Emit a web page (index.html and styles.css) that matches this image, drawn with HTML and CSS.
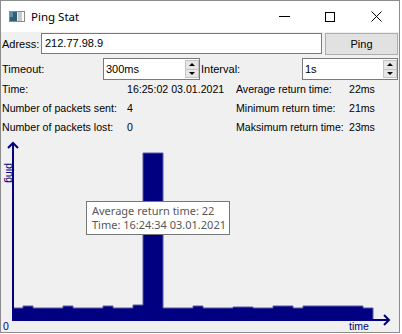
FILE: index.html
```html
<!DOCTYPE html>
<html lang="en">
<head>
    <meta charset="UTF-8">
    <title>Ping Stat</title>
    <link rel="stylesheet" href="styles.css">
</head>
<body>
    <div class="window">
        <div class="titlebar">
            <svg class="app-icon" width="16" height="11" viewBox="0 0 16 11">
                <rect x="0.5" y="0.5" width="15" height="10" fill="#e8e8e8" stroke="#8a8a8a"/>
                <rect x="1" y="1" width="7" height="9" fill="#2e5e78"/>
                <rect x="1" y="1" width="3" height="5" fill="#5f8fa8"/>
                <rect x="9" y="1" width="4" height="9" fill="#c9c9c9"/>
                <rect x="13" y="1" width="2" height="9" fill="#ffffff"/>
            </svg>
            <span class="title">Ping Stat</span>
            <div class="caption">
                <span class="cap">
                    <svg width="11" height="11" viewBox="0 0 11 11"><path d="M0 5.5H11" stroke="#000" stroke-width="1"/></svg>
                </span>
                <span class="cap">
                    <svg width="10" height="10" viewBox="0 0 10 10"><rect x="0.5" y="0.5" width="9" height="9" fill="none" stroke="#000"/></svg>
                </span>
                <span class="cap">
                    <svg width="11" height="11" viewBox="0 0 11 11"><path d="M0.5 0.5L10.5 10.5M10.5 0.5L0.5 10.5" stroke="#000" stroke-width="1"/></svg>
                </span>
            </div>
        </div>

        <div class="content">
            <div class="address-row">
                <span class="lbl lbl-address">Adress:</span>
                <div class="textbox">212.77.98.9</div>
                <div class="btn">Ping</div>
            </div>

            <div class="spin-row">
                <span class="lbl lbl-wide">Timeout:</span>
                <div class="spin spin-timeout">
                    <span class="spin-value">300ms</span>
                    <div class="spin-btns"><span class="arrow up"></span><span class="arrow down"></span></div>
                </div>
                <span class="lbl lbl-wide">Interval:</span>
                <div class="spin spin-interval">
                    <span class="spin-value">1s</span>
                    <div class="spin-btns"><span class="arrow up"></span><span class="arrow down"></span></div>
                </div>
            </div>

            <div class="stats">
                <span>Time:</span>
                <span>16:25:02 03.01.2021</span>
                <span>Average return time:</span>
                <span>22ms</span>
                <span>Number of packets sent:</span>
                <span>4</span>
                <span>Minimum return time:</span>
                <span>21ms</span>
                <span>Number of packets lost:</span>
                <span>0</span>
                <span>Maksimum return time:</span>
                <span>23ms</span>
            </div>

            <div class="chart">
                <svg class="chart-svg" width="398" height="194" viewBox="1 137 398 194">
                    <polygon class="bars" points="13,308 23,308 23,306 33,306 33,308 63,308 63,306 73,306 73,308 103,308 103,306 113,306 113,308 133,308 133,305 143,305 143,153 163,153 163,308 193,308 193,306 203,306 203,308 233,308 233,307 253,307 253,308 273,308 273,306 293,306 293,308 303,308 303,306 363,306 363,308 373,308 373,320 13,320"/>
                    <path class="axis" d="M13 321V143M8 148L13 143L18 148"/>
                    <path class="axis" d="M12 320H389M384 315L389 320L384 325"/>
                    <text class="axis-label" transform="translate(6,163) rotate(90)">ping</text>
                    <text class="axis-label" x="3" y="330">0</text>
                    <text class="axis-label" x="349" y="330">time</text>
                </svg>
                <div class="tooltip">Average return time: 22<br>Time: 16:24:34 03.01.2021</div>
            </div>
        </div>
    </div>
</body>
</html>
```

FILE: styles.css
```css
body { margin: 0; background: #fff; font-family: "Liberation Sans", Arial, sans-serif; font-size: 11px; color: #000; }
.window { width: 400px; height: 333px; box-sizing: border-box; border: 1px solid #8c8c8c; display: flex; flex-direction: column; }

.titlebar { height: 31px; flex-shrink: 0; background: #fff; display: flex; align-items: center; }
.app-icon { display: block; margin-left: 8px; margin-top: -1px; }
.title { margin-left: 6px; margin-top: -1px; font-family: "Noto Sans", sans-serif; font-size: 11.5px; }
.caption { margin-left: auto; display: flex; height: 100%; }
.cap { width: 46px; display: flex; align-items: center; justify-content: center; }
.cap svg { display: block; }

.content { flex: 1; background: #f0f0f0; }
.lbl { line-height: 22px; padding-left: 1px; box-sizing: border-box; white-space: nowrap; }

.address-row { display: flex; margin-top: 1px; height: 22px; }
.lbl-address { width: 40px; }
.textbox { width: 281px; height: 21px; box-sizing: border-box; border: 1px solid #7a7a7a; background: #fff; padding-left: 3px; line-height: 19px; }
.btn { width: 73px; height: 22px; margin-left: 3px; box-sizing: border-box; border: 1px solid #adadad; background: #e1e1e1; text-align: center; line-height: 20px; }

.spin-row { display: flex; margin-top: 3px; height: 22px; }
.lbl-wide { width: 102px; }
.spin { height: 22px; box-sizing: border-box; border: 1px solid #7a7a7a; background: #fff; display: flex; align-items: center; }
.spin-timeout { width: 97px; }
.spin-interval { width: 96px; }
.spin-value { padding-left: 2px; }
.spin-btns { margin-left: auto; width: 14px; height: 18px; display: flex; flex-direction: column; }
.arrow { flex: 1; box-sizing: border-box; border: 1px solid #c4c4c4; background: #e6e6e6; display: flex; align-items: center; justify-content: center; }
.arrow.down { border-top: none; }
.arrow::after { content: ""; width: 0; height: 0; border-left: 3px solid transparent; border-right: 3px solid transparent; }
.arrow.up::after { border-bottom: 3px solid #000; }
.arrow.down::after { border-top: 3px solid #000; }

.stats { display: grid; grid-template-columns: 125px 109px 113px 1fr; grid-auto-rows: 19px; padding-left: 1px; font-size: 10.6px; line-height: 19px; white-space: nowrap; }

.chart { position: relative; height: 194px; }
.chart-svg { display: block; overflow: visible; }
.bars { fill: #000080; stroke: #5a5aa6; stroke-width: 1; }
.axis { fill: none; stroke: #000080; stroke-width: 2; }
.axis-label { fill: #000080; font-family: "Liberation Sans", Arial, sans-serif; font-size: 10.5px; }
.tooltip { position: absolute; left: 85px; top: 64px; width: 144px; height: 34px; box-sizing: border-box; border: 1px solid #767676; background: #fff; padding: 2px 0 0 5px; font-family: "Noto Sans", sans-serif; font-size: 11px; line-height: 14px; color: #575757; white-space: nowrap; }
```
